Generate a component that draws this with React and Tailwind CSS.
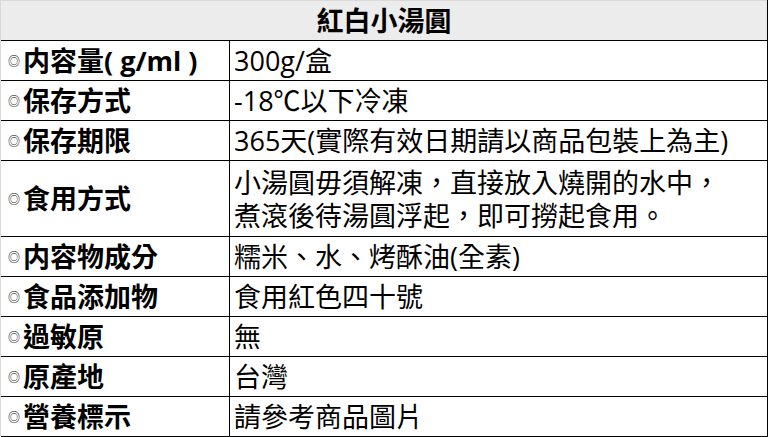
import React from "react";

const rows = [
  ["内容量( g/ml )", ["300g/盒"]],
  ["保存方式", ["-18℃以下冷凍"]],
  ["保存期限", ["365天(實際有效日期請以商品包裝上為主)"]],
  ["食用方式", ["小湯圓毋須解凍，直接放入燒開的水中，", "煮滾後待湯圓浮起，即可撈起食用。"]],
  ["内容物成分", ["糯米、水、烤酥油(全素)"]],
  ["食品添加物", ["食用紅色四十號"]],
  ["過敏原", ["無"]],
  ["原產地", ["台灣"]],
  ["營養標示", ["請參考商品圖片"]],
];

export default function App() {
  return (
    <div
      className="w-[768px] bg-white text-black border-l border-r border-l-[#d9d9d9] border-r-black text-[27px]"
      style={{ fontFamily: '"Open Sans", "Noto Sans CJK TC", sans-serif' }}
    >
      <div className="h-[41px] border-t border-t-[#d9d9d9] border-b border-b-black bg-[#ececec] flex items-center justify-center font-bold leading-none">
        紅白小湯圓
      </div>
      {rows.map(([label, value], i) => (
        <div
          key={i}
          className={`flex border-b border-black ${value.length > 1 ? "h-[76px]" : "h-[40px]"}`}
        >
          <div className="w-[229px] shrink-0 border-r border-black flex items-center pl-[7px] font-bold leading-none">
            <span className="text-[12px] mr-[3px] mt-[3px] font-normal">◎</span>
            <span>{label}</span>
          </div>
          <div className="flex-1 flex flex-col justify-center pl-[4px] leading-[33px] whitespace-nowrap">
            {value.map((v, j) => (
              <div key={j}>{v}</div>
            ))}
          </div>
        </div>
      ))}
    </div>
  );
}
